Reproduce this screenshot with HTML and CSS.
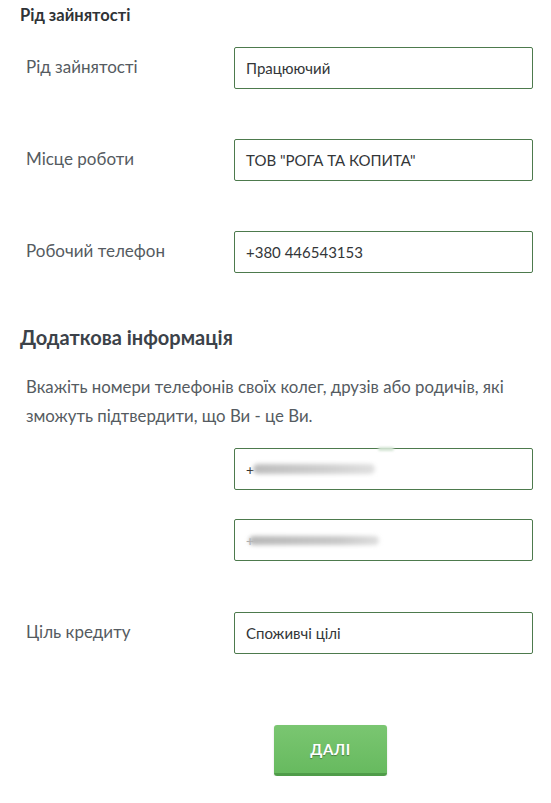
FILE: index.html
```html
<!DOCTYPE html>
<html lang="uk">
<head>
<meta charset="utf-8">
<link rel="stylesheet" href="styles.css">
</head>
<body>
<div class="page">
  <h3 class="section-title">Рід зайнятості</h3>
  <div class="rows rows-top">
    <div class="row">
      <div class="label">Рід зайнятості</div>
      <div class="field">Працюючий</div>
    </div>
    <div class="row">
      <div class="label">Місце роботи</div>
      <div class="field">ТОВ "РОГА ТА КОПИТА"</div>
    </div>
    <div class="row">
      <div class="label">Робочий телефон</div>
      <div class="field">+380 446543153</div>
    </div>
  </div>

  <h2 class="heading">Додаткова інформація</h2>
  <p class="note">Вкажіть номери телефонів своїх колег, друзів або родичів, які зможуть підтвердити, що Ви - це Ви.</p>

  <div class="phones">
    <div class="row">
      <div class="label"></div>
      <div class="field"><span class="plus">+</span><span class="blur blur-a"></span><span class="smudge"></span></div>
    </div>
    <div class="row">
      <div class="label"></div>
      <div class="field"><span class="plus faint">+</span><span class="blur blur-b"></span></div>
    </div>
  </div>

  <div class="row row-goal">
    <div class="label">Ціль кредиту</div>
    <div class="field">Споживчі цілі</div>
  </div>

  <div class="actions">
    <button class="btn">ДАЛІ</button>
  </div>
</div>
</body>
</html>
```

FILE: styles.css
```css
html, body {
  margin: 0;
  padding: 0;
  background: #ffffff;
}
body {
  font-family: Lato, "Noto Sans", sans-serif;
  color: #555b61;
}
.page {
  width: 551px;
  padding: 0 18px 0 20px;
  box-sizing: border-box;
}
.section-title {
  margin: 0;
  padding-top: 5px;
  font-size: 16.5px;
  line-height: 20px;
  font-weight: 700;
  color: #2f3336;
}
.rows-top {
  margin-top: 22px;
  display: flex;
  flex-direction: column;
  gap: 50px;
}
.row {
  display: grid;
  grid-template-columns: 214px 299px;
  align-items: center;
}
.label {
  padding-left: 6px;
  font-size: 17px;
  line-height: 20px;
  color: #555b61;
  margin-top: -3px;
}
.field {
  position: relative;
  height: 42px;
  box-sizing: border-box;
  border: 1px solid #4d7a4d;
  border-radius: 2px;
  padding: 0 11px;
  display: flex;
  align-items: center;
  font-size: 15px;
  color: #333638;
}
.heading {
  margin: 52px 0 0 0;
  font-size: 20px;
  line-height: 24px;
  font-weight: 700;
  color: #3c4249;
}
.note {
  margin: 23px 0 0 6px;
  font-size: 16.8px;
  line-height: 29px;
  color: #555b61;
}
.phones {
  margin-top: 18px;
  display: flex;
  flex-direction: column;
  gap: 29px;
}
.plus {
  font-size: 14px;
  color: #333;
  margin-right: 1px;
}
.plus.faint {
  color: #aaa;
}
.blur {
  display: inline-block;
  height: 10px;
  border-radius: 5px;
  background: linear-gradient(90deg, #bdbdbd, #cfcfcf 60%, #e0e0e0);
  filter: blur(2px);
}
.blur-a {
  width: 122px;
  margin-left: -2px;
}
.blur-b {
  width: 130px;
  height: 9px;
  margin-left: -6px;
  background: linear-gradient(90deg, #b8b8b8, #c8c8c8 70%, #dedede);
}
.smudge {
  position: absolute;
  top: -2px;
  left: 143px;
  width: 16px;
  height: 4px;
  border-radius: 3px;
  background: #d3e4d3;
  filter: blur(1px);
}
.row-goal {
  margin-top: 51px;
}
.actions {
  margin-top: 71px;
  padding-left: 254px;
}
.btn {
  width: 113px;
  height: 51px;
  border: 0;
  border-bottom: 3px solid #4f9c49;
  border-radius: 3px;
  background: linear-gradient(180deg, #7ac671 0%, #67ba5f 100%);
  color: #ffffff;
  font-family: Lato, "Noto Sans", sans-serif;
  font-size: 15px;
  font-weight: 700;
  letter-spacing: 0.5px;
  text-shadow: 0 1px 1px rgba(0,0,0,0.35);
  padding: 0;
  box-shadow: 0 1px 2px rgba(0,0,0,0.15);
}
```
